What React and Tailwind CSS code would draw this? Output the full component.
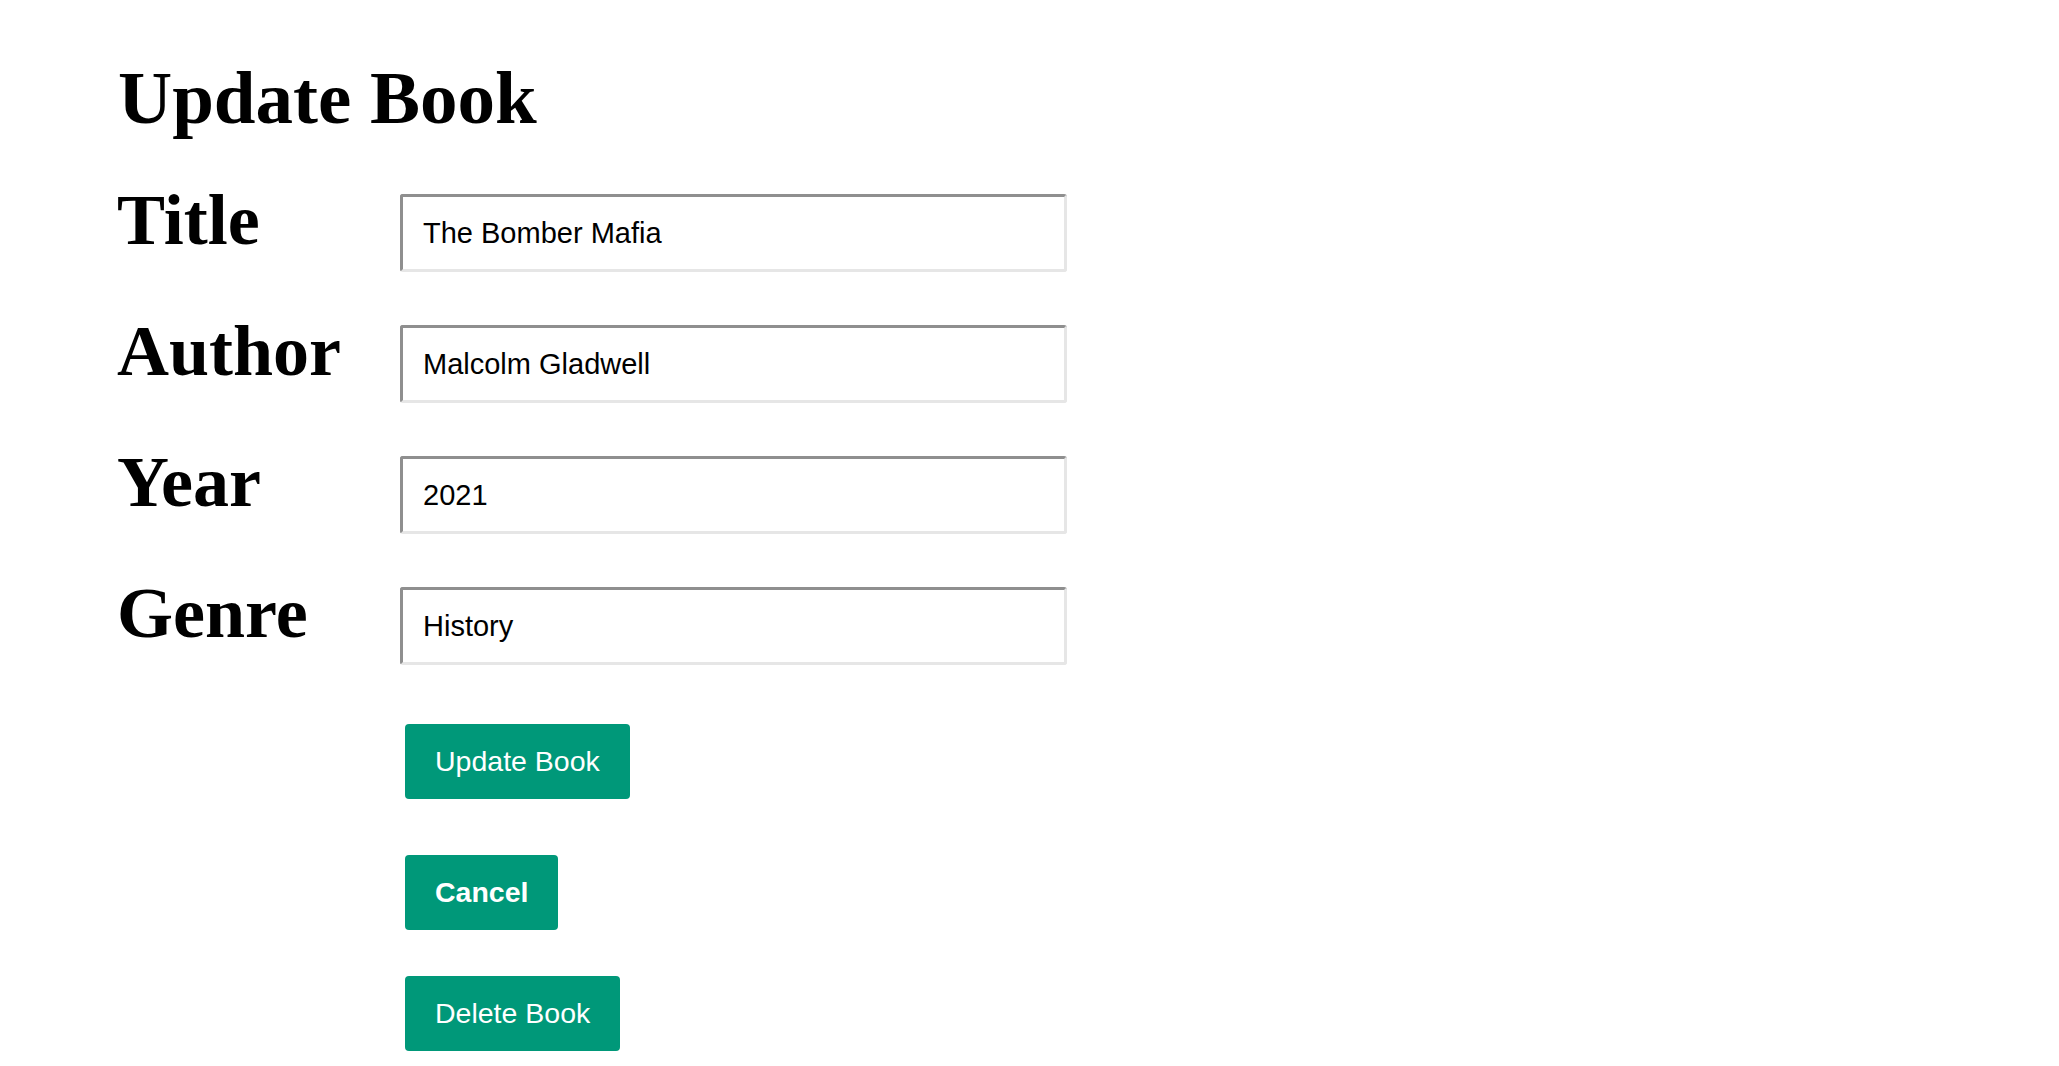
const fields = [
  { label: "Title", value: "The Bomber Mafia" },
  { label: "Author", value: "Malcolm Gladwell" },
  { label: "Year", value: "2021" },
  { label: "Genre", value: "History" },
];

const serif = { fontFamily: '"Liberation Serif", "Times New Roman", serif' };

const App = () => {
  return (
    <div className="min-h-screen bg-white pl-[117px] pt-[72px] font-['Liberation_Sans',Arial,sans-serif]">
      <h1
        style={serif}
        className="mb-[70px] ml-[1px] text-[75px] font-bold leading-[52px] text-black"
      >
        Update Book
      </h1>

      <form>
        {fields.map((field) => (
          <div key={field.label} className="mb-[53px] flex items-start">
            <label
              style={serif}
              className="w-[283px] text-[72px] font-bold leading-[52px] text-black"
            >
              {field.label}
            </label>
            <input
              type="text"
              defaultValue={field.value}
              className="h-[78px] w-[667px] rounded-[3px] border-[3px] border-t-[#8f8f8f] border-l-[#8f8f8f] border-b-[#e6e6e6] border-r-[#e6e6e6] bg-white pl-[20px] text-[29px] text-black outline-none"
            />
          </div>
        ))}

        <div className="ml-[288px] flex flex-col items-start pt-[6px]">
          <button
            type="button"
            className="h-[75px] rounded-[4px] bg-[#009879] px-[30px] text-[28.5px] text-white"
          >
            Update Book
          </button>
          <button
            type="button"
            className="mt-[56px] h-[75px] rounded-[4px] bg-[#009879] px-[30px] text-[28.5px] font-bold text-white"
          >
            Cancel
          </button>
          <button
            type="button"
            className="mt-[46px] h-[75px] rounded-[4px] bg-[#009879] px-[30px] text-[28.5px] text-white"
          >
            Delete Book
          </button>
        </div>
      </form>
    </div>
  );
};

export default App;
